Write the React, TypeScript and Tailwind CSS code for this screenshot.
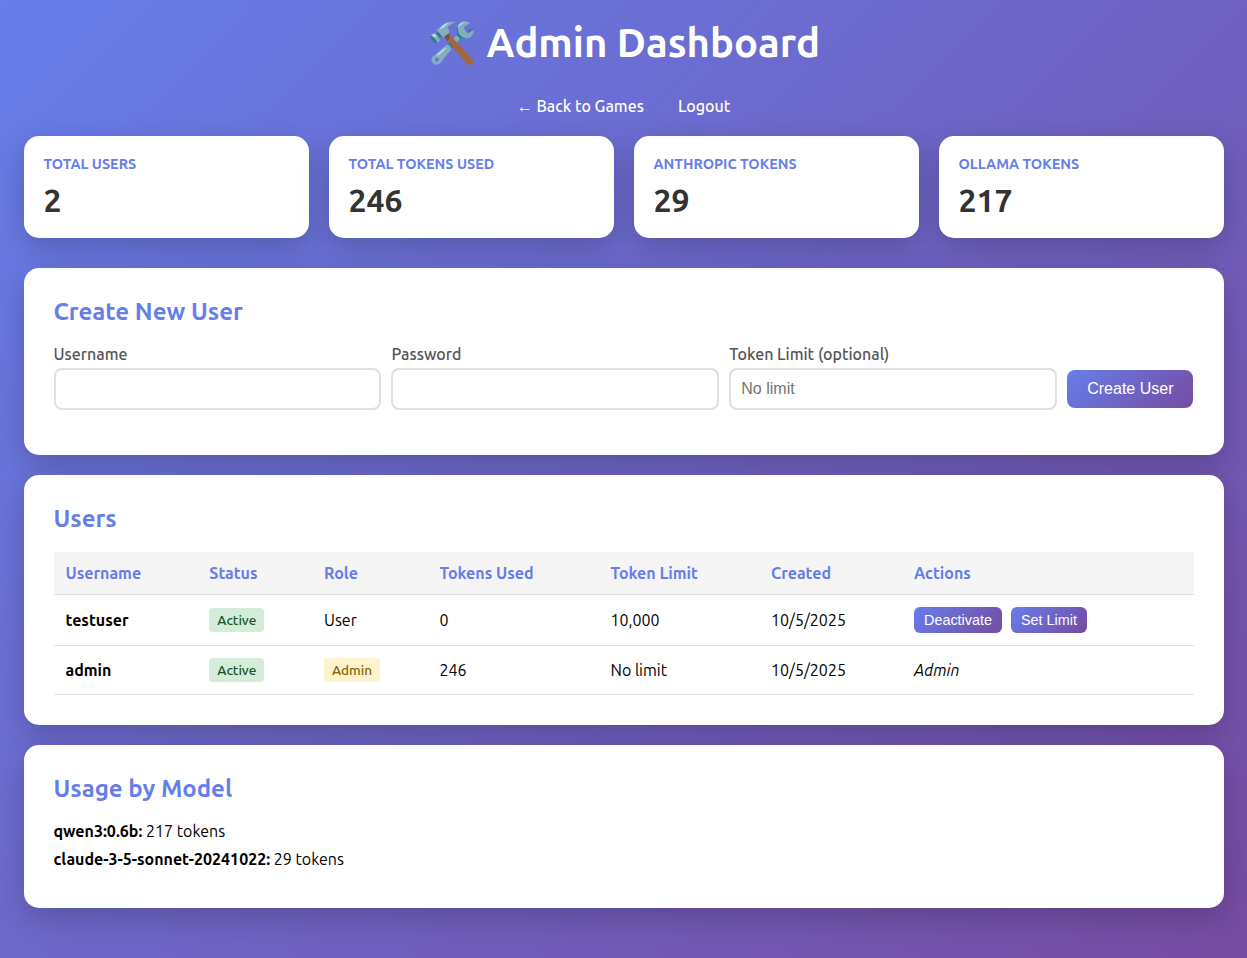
const sans = "font-['Ubuntu','Noto_Sans',sans-serif]";

const stats = [
  ["Total Users", "2"],
  ["Total Tokens Used", "246"],
  ["Anthropic Tokens", "29"],
  ["Ollama Tokens", "217"],
];

function Panel({ title, children }: { title: string; children: React.ReactNode }) {
  return (
    <section className="rounded-[15px] bg-white p-[30px] shadow-[0_10px_30px_rgba(0,0,0,0.2)]">
      <h2 className="text-[24px] leading-[28px] font-semibold text-[#667eea]">{title}</h2>
      {children}
    </section>
  );
}

function Field({ label, placeholder }: { label: string; placeholder?: string }) {
  return (
    <div className="flex-1">
      <label className="block h-[19px] mb-[5px] text-[16px] leading-[20px] font-medium text-[#555]">{label}</label>
      <input
        placeholder={placeholder}
        className="block w-full h-[42px] rounded-[8px] border-2 border-[#e0e0e0] bg-white px-[10px] font-['Liberation_Sans',sans-serif] text-[16px] placeholder:text-[#757575] outline-none"
      />
    </div>
  );
}

const th = "px-[12px] py-[12px] text-left text-[16px] leading-[18px] font-semibold text-[#667eea] border-b border-[#e0e0e0]";
const td = "px-[12px] py-[12px] text-[16px] leading-[18px] text-black border-b border-[#e0e0e0] align-middle";
const btn = "h-[26px] rounded-[6px] px-[10px] bg-[linear-gradient(135deg,#667eea_0%,#764ba2_100%)] text-white font-['Liberation_Sans',sans-serif] text-[14.4px] leading-[16px]";

function Badge({ kind, children }: { kind: "green" | "yellow"; children: React.ReactNode }) {
  return (
    <span
      className={
        kind === "green"
          ? "inline-block h-[24px] rounded-[4px] bg-[#d4edda] px-[8px] text-[13.6px] leading-[24px] font-medium text-[#155724]"
          : "inline-block h-[24px] rounded-[4px] bg-[#fff3cd] px-[8px] text-[13.6px] leading-[24px] font-medium text-[#856404]"
      }
    >
      {children}
    </span>
  );
}

export default function App() {
  return (
    <div className={`${sans} min-h-screen bg-[linear-gradient(135deg,#667eea_0%,#764ba2_100%)] p-[20px] pb-[50px]`}>
      <div className="mx-auto max-w-[1200px]">
        <h1 className="text-center text-[40px] leading-[46px] font-semibold text-white">🛠️ Admin Dashboard</h1>
        <nav className="mt-[30px] mb-[20px] flex h-[20px] items-center justify-center gap-[34px] text-[16px] leading-[20px] font-medium text-white">
          <a>← Back to Games</a>
          <a>Logout</a>
        </nav>
        <div className="grid grid-cols-4 gap-[20px]">
          {stats.map(([label, value]) => (
            <div key={label} className="h-[102px] rounded-[15px] bg-white p-[20px] shadow-[0_10px_30px_rgba(0,0,0,0.2)]">
              <div className="text-[14.4px] leading-[16px] font-semibold uppercase text-[#667eea]">{label}</div>
              <div className="mt-[10px] text-[32px] leading-[37px] font-bold text-[#333]">{value}</div>
            </div>
          ))}
        </div>
        <div className="mt-[30px] flex flex-col gap-[20px]">
          <Panel title="Create New User">
            <form className="mt-[18px] flex items-end gap-[10px] pb-[15px]">
              <Field label="Username" />
              <Field label="Password" />
              <Field label="Token Limit (optional)" placeholder="No limit" />
              <button type="button" className="mb-[2px] mr-[0.3px] h-[38px] w-[126px] rounded-[8px] pl-[20px] text-left bg-[linear-gradient(135deg,#667eea_0%,#764ba2_100%)] font-['Liberation_Sans',sans-serif] text-[16px] text-white">
                Create User
              </button>
            </form>
          </Panel>
          <Panel title="Users">
            <table className="mt-[19px] w-full table-fixed border-collapse">
              <colgroup>
                <col className="w-[143.8px]" />
                <col className="w-[114.7px]" />
                <col className="w-[115.5px]" />
                <col className="w-[171px]" />
                <col className="w-[160.5px]" />
                <col className="w-[143px]" />
                <col />
              </colgroup>
              <thead>
                <tr className="bg-[#f5f5f5]">
                  {["Username", "Status", "Role", "Tokens Used", "Token Limit", "Created", "Actions"].map((h) => (
                    <th key={h} className={th}>{h}</th>
                  ))}
                </tr>
              </thead>
              <tbody>
                <tr>
                  <td className={`${td} font-bold`}>testuser</td>
                  <td className={td}><Badge kind="green">Active</Badge></td>
                  <td className={td}>User</td>
                  <td className={td}>0</td>
                  <td className={td}>10,000</td>
                  <td className={td}>10/5/2025</td>
                  <td className={td}>
                    <div className="flex gap-[9px]">
                      <button type="button" className={btn}>Deactivate</button>
                      <button type="button" className={btn}>Set Limit</button>
                    </div>
                  </td>
                </tr>
                <tr>
                  <td className={`${td} font-bold`}>admin</td>
                  <td className={td}><Badge kind="green">Active</Badge></td>
                  <td className={td}><Badge kind="yellow">Admin</Badge></td>
                  <td className={td}>246</td>
                  <td className={td}>No limit</td>
                  <td className={td}>10/5/2025</td>
                  <td className={`${td} italic`}>Admin</td>
                </tr>
              </tbody>
            </table>
          </Panel>
          <Panel title="Usage by Model">
            <div className="mt-[14px] pb-[5px] text-[16px] leading-[28px] text-black">
              <p><strong className="font-bold">qwen3:0.6b:</strong> 217 tokens</p>
              <p><strong className="font-bold">claude-3-5-sonnet-20241022:</strong> 29 tokens</p>
            </div>
          </Panel>
        </div>
      </div>
    </div>
  );
}
